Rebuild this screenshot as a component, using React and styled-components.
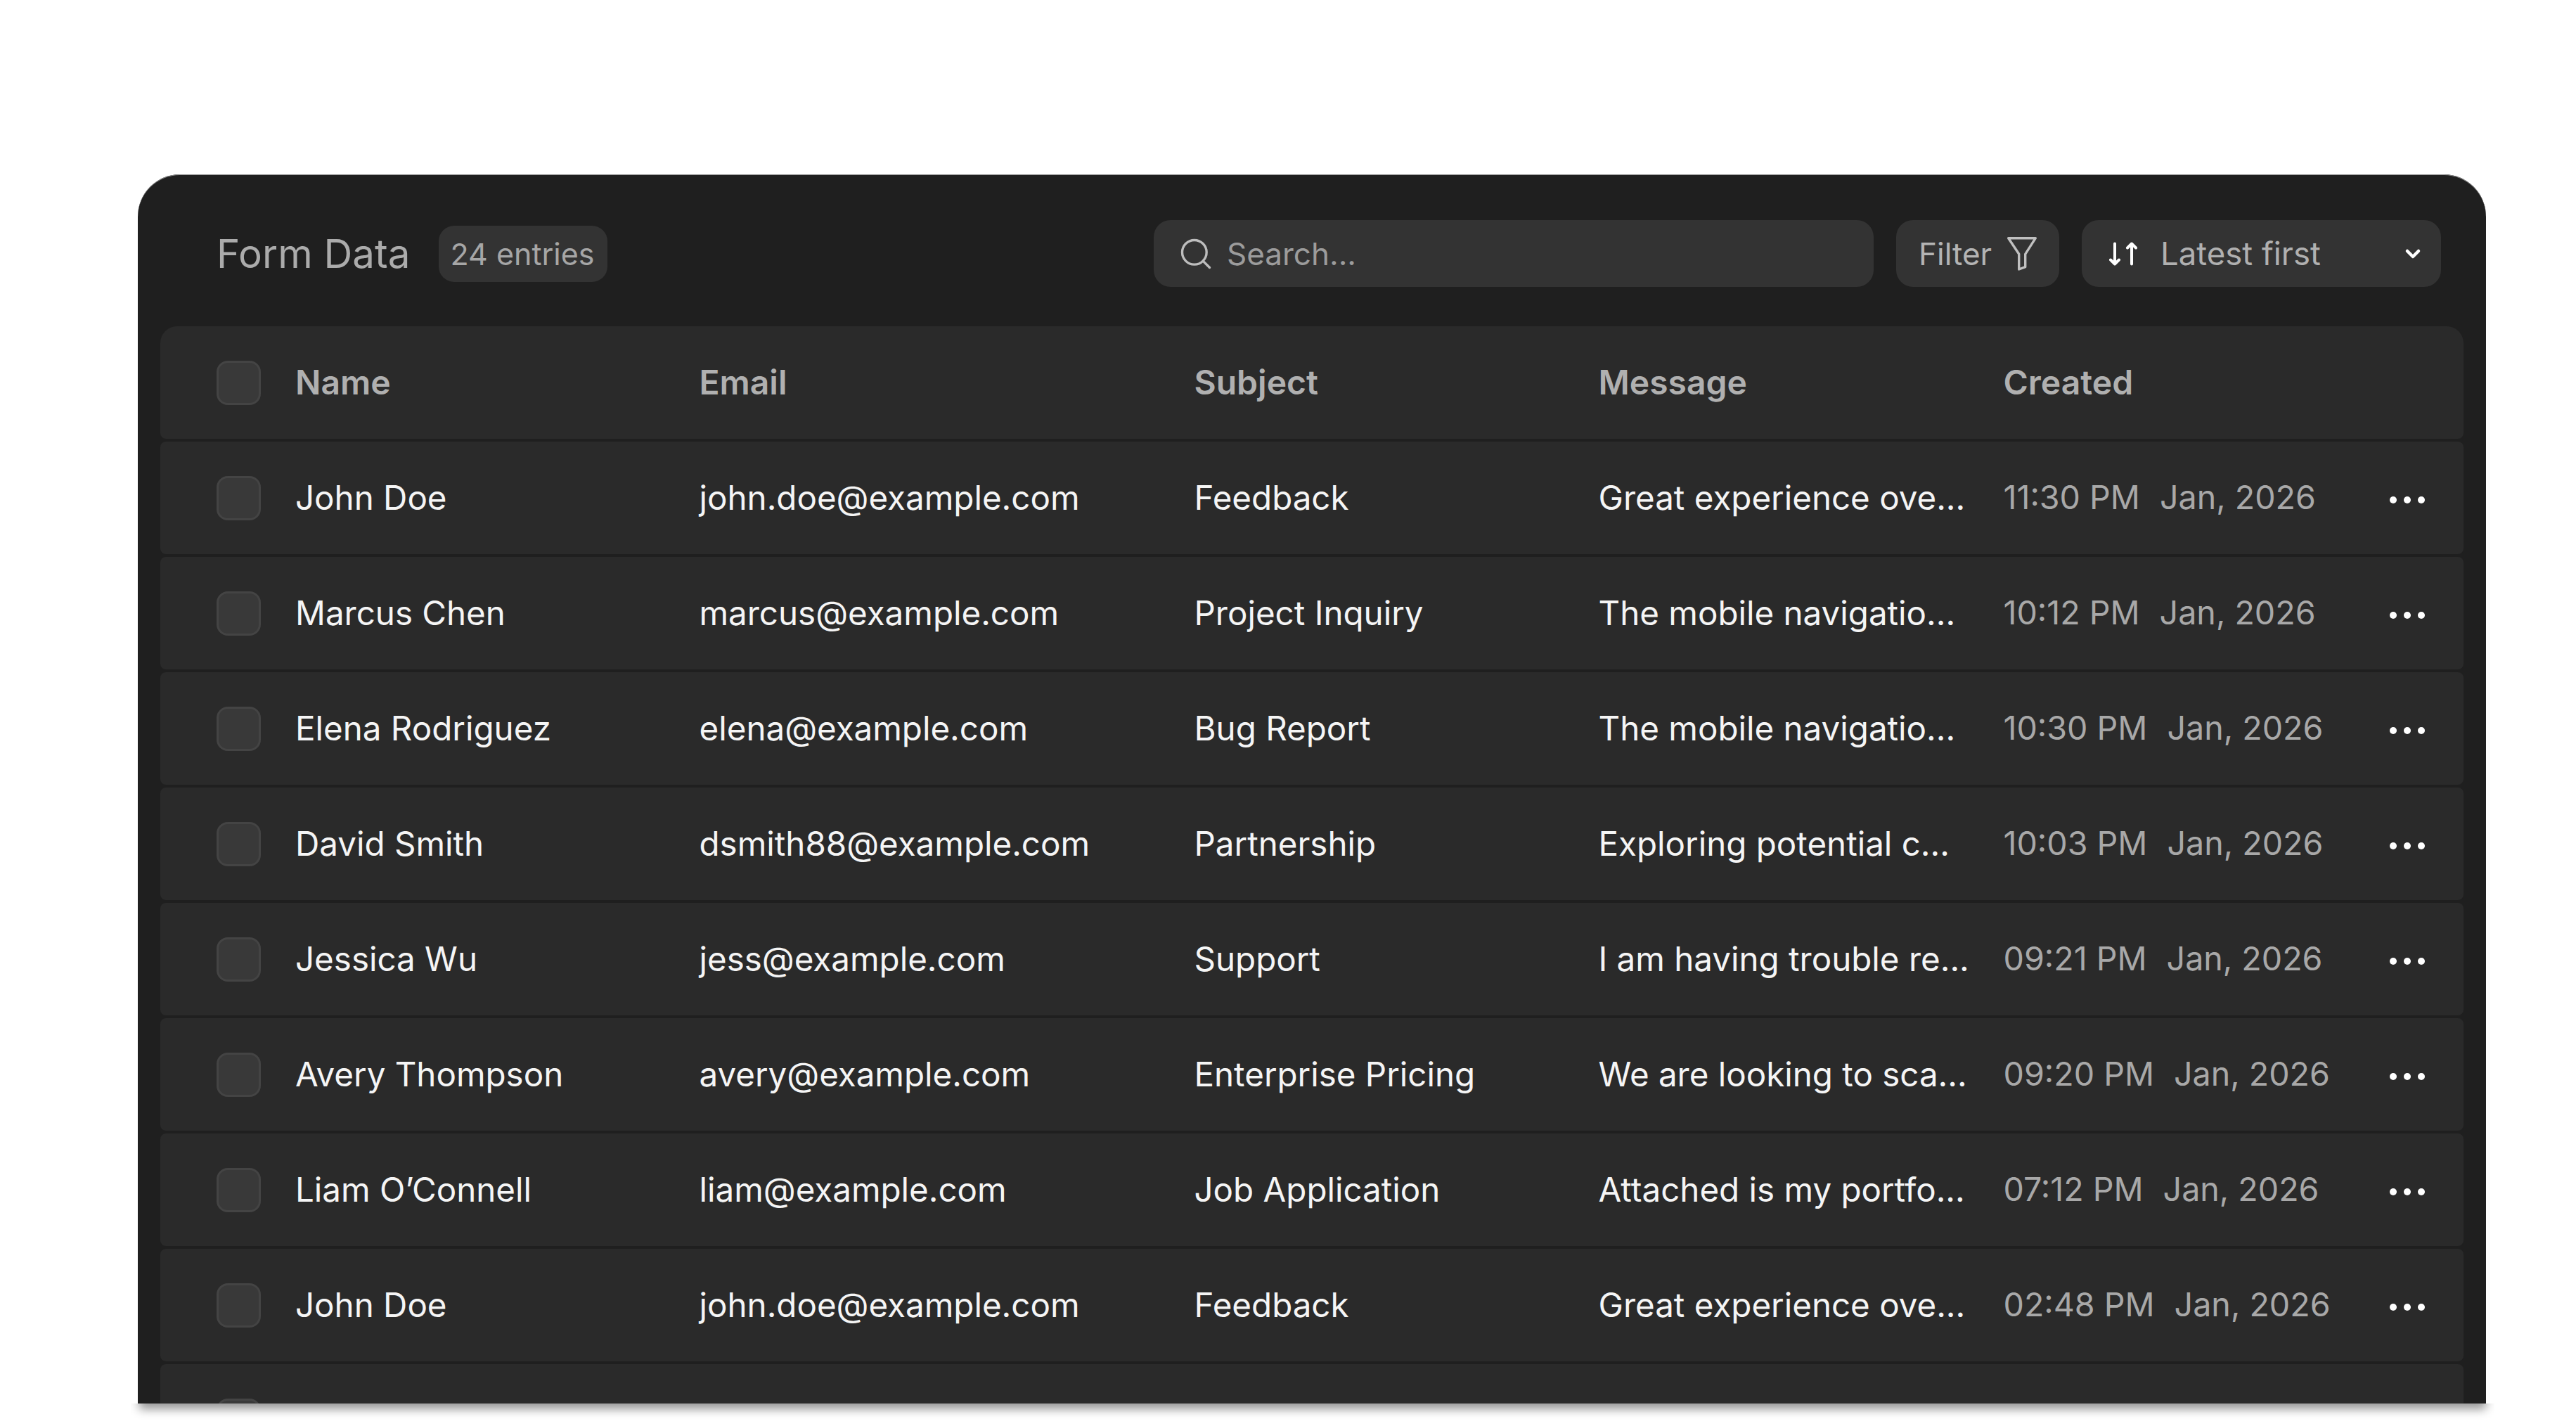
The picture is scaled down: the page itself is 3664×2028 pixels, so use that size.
import React from 'react';
import styled, { createGlobalStyle } from 'styled-components';
import { ChevronDown, Search } from 'lucide-react';

const rows = [
  { name: 'John Doe', email: 'john.doe@example.com', subject: 'Feedback', message: 'Great experience ove...', time: '11:30 PM' },
  { name: 'Marcus Chen', email: 'marcus@example.com', subject: 'Project Inquiry', message: 'The mobile navigatio...', time: '10:12 PM' },
  { name: 'Elena Rodriguez', email: 'elena@example.com', subject: 'Bug Report', message: 'The mobile navigatio...', time: '10:30 PM' },
  { name: 'David Smith', email: 'dsmith88@example.com', subject: 'Partnership', message: 'Exploring potential c...', time: '10:03 PM' },
  { name: 'Jessica Wu', email: 'jess@example.com', subject: 'Support', message: 'I am having trouble re...', time: '09:21 PM' },
  { name: 'Avery Thompson', email: 'avery@example.com', subject: 'Enterprise Pricing', message: 'We are looking to sca...', time: '09:20 PM' },
  { name: 'Liam O’Connell', email: 'liam@example.com', subject: 'Job Application', message: 'Attached is my portfo...', time: '07:12 PM' },
  { name: 'John Doe', email: 'john.doe@example.com', subject: 'Feedback', message: 'Great experience ove...', time: '02:48 PM' },
  { name: '', email: '', subject: '', message: '', time: '' },
];

const GlobalStyle = createGlobalStyle`
  html, body {
    margin: 0;
    background: #fff;
    font-family: Inter, "Liberation Sans", sans-serif;
    overflow: hidden;
  }
`;

const Page = styled.div`
  width: 3664px;
  height: 2028px;
  padding: 248px 128px 0 196px;
  box-sizing: border-box;
  overflow: hidden;
`;

const Card = styled.div`
  height: 1748px;
  background: #1f1f1f;
  border-radius: 60px 60px 0 0;
  box-shadow: inset 0 1px 0 #8a8a8a;
  overflow: hidden;
`;

const CardShadow = styled.div`
  position: relative;
  height: 32px;
  margin: 0 -12px 0 -10px;
  overflow: hidden;
  &::before {
    content: '';
    position: absolute;
    left: 12px;
    right: 12px;
    top: -40px;
    height: 40px;
    box-shadow: 0 8px 14px rgba(0, 0, 0, 0.42);
  }
`;

const Header = styled.header`
  height: 216px;
  box-sizing: border-box;
  padding: 65px 64px 56px 112px;
  display: flex;
  align-items: center;
`;

const Title = styled.h1`
  margin: 0;
  font-size: 56.5px;
  font-weight: 400;
  color: #ababab;
`;

const CountPill = styled.span`
  margin-left: 40px;
  height: 80px;
  padding: 0 18px 0 17px;
  display: flex;
  align-items: center;
  border-radius: 22px;
  background: #333;
  color: #a6a6a6;
  font-size: 43px;
`;

const Tools = styled.div`
  margin-left: auto;
  display: flex;
  gap: 32px;
`;

const SearchBox = styled.div`
  width: 1024px;
  height: 95px;
  box-sizing: border-box;
  padding-left: 34px;
  display: flex;
  align-items: center;
  gap: 18px;
  border-radius: 24px;
  background: #333;
  color: #bdbdbd;
  font-size: 44px;
`;

const SearchText = styled.span`
  color: #9c9c9c;
`;

const FilterButton = styled.div`
  width: 232px;
  height: 95px;
  box-sizing: border-box;
  padding-left: 32px;
  display: flex;
  align-items: center;
  gap: 21px;
  border-radius: 24px;
  background: #333;
  color: #b4b4b4;
  font-size: 44px;
`;

const SortSelect = styled.div`
  width: 511px;
  height: 95px;
  box-sizing: border-box;
  padding: 0 24px 0 39px;
  display: flex;
  align-items: center;
  border-radius: 24px;
  background: #333;
  color: #b0b0b0;
  font-size: 45.5px;
`;

const SortLabel = styled.span`
  margin-left: 33px;
  flex: 1;
`;

const Table = styled.div`
  margin: 0 32px;
  display: flex;
  flex-direction: column;
  gap: 4px;
`;

const Row = styled.div`
  height: 160px;
  flex-shrink: 0;
  box-sizing: border-box;
  padding-left: 80px;
  display: grid;
  grid-template-columns: 63px 623.5px 704px 575px 576px 1fr;
  align-items: center;
  background: #2a2a2a;
  border-radius: ${(p) => (p.$head ? '24px 24px 8px 8px' : '8px')};
  color: ${(p) => (p.$head ? '#b0b0b0' : '#f5f5f5')};
  font-size: ${(p) => (p.$head ? '48px' : '47.5px')};
  font-weight: ${(p) => (p.$head ? 600 : 400)};
`;

const Checkbox = styled.span`
  width: 63px;
  height: 63px;
  box-sizing: border-box;
  display: block;
  border: 3px solid #444;
  border-radius: 16px;
  background: #393939;
`;

const Cell = styled.div`
  white-space: nowrap;
  margin-bottom: 2px;
`;

const NameCell = styled(Cell)`
  margin-left: 49px;
`;

const CreatedCell = styled.div`
  display: flex;
  align-items: center;
  gap: 28px;
  color: #a8a8a8;
  font-size: 46.6px;
  white-space: nowrap;
  padding-right: 55px;
  margin-bottom: 2px;
`;

const DotsIcon = styled.svg`
  margin-left: auto;
  margin-top: 8px;
  flex-shrink: 0;
`;

const FunnelIcon = () => (
  <svg width="44" height="50" viewBox="0 0 44 50" fill="none" stroke="#c0c0c0" strokeWidth="3.4" strokeLinejoin="round">
    <path d="M2.7 2.7H41.3L26.7 25.3V43.7L17.7 47V25.3Z" />
  </svg>
);

const SortIcon = () => (
  <svg width="40" height="34" viewBox="0 0 40 34" fill="none" stroke="#fff" strokeWidth="4" strokeLinecap="round" strokeLinejoin="round">
    <path d="M8 2.5V31.5M2 25.5L8 31.5L14 25.5" />
    <path d="M32 31.5V2.5M26 8.5L32 2.5L38 8.5" />
  </svg>
);

const Dots = () => (
  <DotsIcon width="50" height="10" viewBox="0 0 50 10" fill="#fff">
    <circle cx="5" cy="5" r="5" />
    <circle cx="25" cy="5" r="5" />
    <circle cx="45" cy="5" r="5" />
  </DotsIcon>
);

const App = () => {
  return (
    <>
      <GlobalStyle />
      <Page>
        <Card>
          <Header>
            <Title>Form Data</Title>
            <CountPill>24 entries</CountPill>
            <Tools>
              <SearchBox>
                <Search size={52} strokeWidth={1.57} />
                <SearchText>Search...</SearchText>
              </SearchBox>
              <FilterButton>
                Filter
                <FunnelIcon />
              </FilterButton>
              <SortSelect>
                <SortIcon />
                <SortLabel>Latest first</SortLabel>
                <ChevronDown size={32} strokeWidth={3.4} color="#fff" />
              </SortSelect>
            </Tools>
          </Header>
          <Table>
            <Row $head>
              <Checkbox />
              <NameCell>Name</NameCell>
              <Cell>Email</Cell>
              <Cell>Subject</Cell>
              <Cell>Message</Cell>
              <Cell>Created</Cell>
            </Row>
            {rows.map((v, i) => (
              <Row key={`row_${i}`}>
                <Checkbox />
                <NameCell>{v.name}</NameCell>
                <Cell>{v.email}</Cell>
                <Cell>{v.subject}</Cell>
                <Cell>{v.message}</Cell>
                {v.time && (
                  <CreatedCell>
                    <span>{v.time}</span>
                    <span>Jan, 2026</span>
                    <Dots />
                  </CreatedCell>
                )}
              </Row>
            ))}
          </Table>
        </Card>
        <CardShadow />
      </Page>
    </>
  );
};

export default App;
